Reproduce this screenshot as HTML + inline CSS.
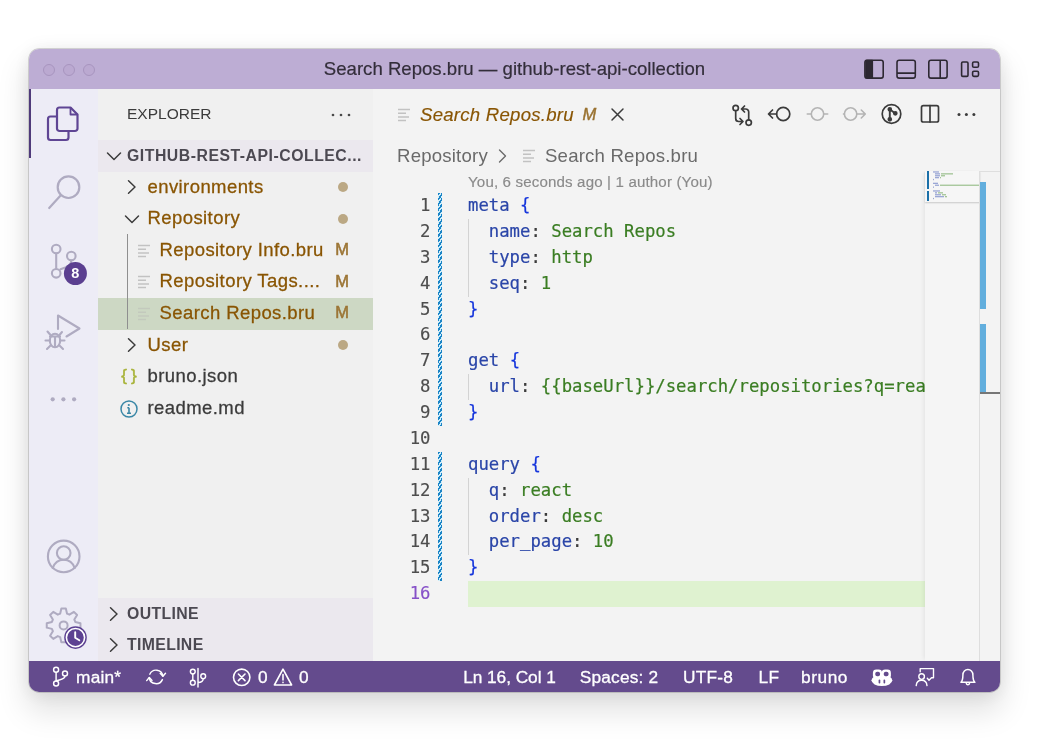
<!DOCTYPE html>
<html lang="en">
<head>
<meta charset="utf-8">
<title>Search Repos.bru — github-rest-api-collection</title>
<style>
*{box-sizing:border-box;margin:0;padding:0}
html,body{width:1039px;height:743px;background:#fff;overflow:hidden}
body{font-family:"Liberation Sans",sans-serif;position:relative;color:#3b3b3b}
#win{transform:translateZ(0);position:absolute;left:29px;top:49px;width:971px;height:643px;border-radius:10px;overflow:hidden;background:#f3f3f3;
 box-shadow:0 0 0 .7px rgba(0,0,0,.2),0 17px 30px 3px rgba(0,0,0,.115),0 2px 20px rgba(0,0,0,.085)}
#title{position:absolute;left:0;top:0;width:971px;height:40px;background:#bdadd4}
#title .t{position:absolute;left:0;right:0;top:0;height:40px;line-height:40px;text-align:center;font-size:18.600px;color:#332e3a;-webkit-text-stroke:.2px}
.tl{position:absolute;top:15px;width:12px;height:12px;border-radius:50%;border:1px solid #a895bf;background:#bba9d1}
#act{position:absolute;left:0;top:40px;width:69px;height:572px;background:#edecf6}
#side{position:absolute;left:69px;top:40px;width:275px;height:572px;background:#f0f0f0}
#ed{position:absolute;left:344px;top:40px;width:627px;height:572px;background:#f3f3f3}
#status{position:absolute;left:0;top:612px;width:971px;height:31px;background:#644b8d;color:#fff;font-size:18px}
.abs{position:absolute}
.row{position:absolute;left:0;width:275px;height:31.600px;line-height:31.600px;font-size:18.500px;white-space:nowrap;letter-spacing:.42px}
.mono{font-family:"DejaVu Sans Mono","Liberation Mono",monospace}

.row .tx{position:absolute;top:0;height:31.600px;line-height:30.200px;-webkit-text-stroke:.28px}
.mod{color:#895503}
.badge{-webkit-text-stroke:.55px;position:absolute;left:237px;top:-.7px;width:14px;text-align:center;color:#9c7535;font-size:16.500px;letter-spacing:0}
.dot{position:absolute;left:239.600px;top:10.500px;width:10.200px;height:10.200px;border-radius:50%;background:#bba884}
.hdr{position:absolute;left:0;width:275px;height:31.600px;background:#ebe8ee;font-weight:bold;font-size:15.800px;color:#4c4952;line-height:31.600px}
svg.ic{position:absolute;overflow:visible}

#ed .ui{position:absolute;white-space:nowrap}
.ln{-webkit-text-stroke:.15px;position:absolute;left:0;width:57.500px;text-align:right;font-size:17.300px;height:25.870px;line-height:25.870px;color:#4d4d4d}
.cl{-webkit-text-stroke:.2px;position:absolute;left:95px;font-size:17.300px;height:25.870px;line-height:25.870px;white-space:pre}
.k{color:#2a45a8}.b{color:#1535dc}.v{color:#3a7d22}.p{color:#3b3b3b}
.ig{position:absolute;left:95px;width:1px;background:#d3d3d3}
.dg{position:absolute;left:65px;width:4.300px;background:repeating-linear-gradient(125deg,#1a84c6 0 1.650px,#cfeefa 1.650px 3px)}
.sb{position:absolute;top:1px;height:31px;line-height:31px;white-space:nowrap;font-size:17.300px;color:#fff;-webkit-text-stroke:.3px;letter-spacing:.2px}
</style>
</head>
<body>
<div id="win">
 <div id="title">
  <div class="tl" style="left:14px"></div><div class="tl" style="left:34px"></div><div class="tl" style="left:54px"></div>
  <svg class="ic" style="left:830px;top:6px" width="130" height="28" viewBox="859 55 130 28" fill="none" stroke="#2d2832" stroke-width="1.600" stroke-linejoin="round">
   <rect x="864.900" y="60.200" width="18.300" height="17.900" rx="2.200"/><path d="M866 60.500H872.300V77.800H866Z" fill="#2d2832"/>
   <rect x="897" y="60.200" width="18.300" height="17.900" rx="2.200"/><path d="M897 73.100H915.300"/>
   <rect x="928.800" y="60.200" width="18.300" height="17.900" rx="2.200"/><path d="M940.200 60.200V78.100"/>
   <rect x="961.600" y="62" width="6.400" height="14.400" rx="1.200"/>
   <rect x="972.600" y="62" width="5.900" height="5.200" rx="1.300"/><rect x="972.600" y="71.200" width="5.900" height="5.200" rx="1.300"/>
  </svg>
  <div class="t">Search Repos.bru — github-rest-api-collection</div>
 </div>
 <div id="act">
  <div class="abs" style="left:0;top:0;width:2px;height:69px;background:#4f3a7a"></div>
  <svg class="abs" style="left:0;top:0" width="69" height="572" viewBox="0 0 69 572" fill="none" stroke-linecap="round" stroke-linejoin="round">
   <!-- explorer (active) -->
   <g stroke="#5f4594" stroke-width="2.2">
    <path d="M27.5 27.5H21.5a2.5 2.5 0 0 0-2.500 2.500V48.500a2.500 2.500 0 0 0 2.500 2.500H37a2.500 2.500 0 0 0 2.500-2.500V42.500"/>
    <path d="M30.500 18.500H41.500L48.500 25.500V39.500a2.500 2.500 0 0 1-2.500 2.500H30.500a2.500 2.500 0 0 1-2.500-2.500V21a2.500 2.500 0 0 1 2.500-2.500Z"/>
    <path d="M41.500 19V25.500H48" stroke-width="1.8"/>
   </g>
   <!-- search -->
   <g stroke="#afabc1" stroke-width="2.2">
    <circle cx="39.5" cy="98.200" r="10.800"/>
    <path d="M31.800 106.300L20.200 119"/>
   </g>
   <!-- source control -->
   <g stroke="#afabc1" stroke-width="2.100">
    <circle cx="27.200" cy="160" r="4.300"/>
    <circle cx="42.300" cy="167" r="4.300"/>
    <circle cx="27.200" cy="184.300" r="4.300"/>
    <path d="M27.200 164.500V180"/>
    <path d="M42.300 171.500c0 5-4 6.500-10.800 8.800"/>
   </g>
   <circle cx="46.400" cy="184.500" r="11.500" fill="#5b3f90"/>
   <!-- debug -->
   <g stroke="#afabc1" stroke-width="2.100">
    <path d="M29 240V226.500L50.500 239.500L37.500 247.500"/>
    <ellipse cx="26" cy="251.500" rx="5.200" ry="6.800"/>
    <path d="M21 247.500H31M26 247.500V258M20.800 251.500H16.500M31.200 251.500H35.500M21.500 256.500L18 260M30.500 256.500L34 260M21.500 246L18.500 242.500M30.500 246L33 243"/>
   </g>
   <!-- more -->
   <g fill="#afabc1"><circle cx="23.700" cy="310.300" r="2.100"/><circle cx="34.400" cy="310.300" r="2.100"/><circle cx="45.100" cy="310.300" r="2.100"/></g>
   <!-- account -->
   <g stroke="#afabc1" stroke-width="2.100">
    <circle cx="34.700" cy="467.400" r="15.800"/>
    <circle cx="34.700" cy="464" r="6.800"/>
    <path d="M23.700 479c2-5.800 6.300-8.300 11-8.300s9 2.500 11 8.300"/>
   </g>
   <!-- gear -->
   <g stroke="#afabc1" stroke-width="2" transform="translate(34.600 536.400)">
    <circle cx="0" cy="0" r="4"/>
    <path d="M-3.47 -11.70L-2.24 -16.85L2.24 -16.85L3.47 -11.70L5.81 -10.73L10.33 -13.50L13.50 -10.33L10.73 -5.81L11.70 -3.47L16.85 -2.24L16.85 2.24L11.70 3.47L10.73 5.81L13.50 10.33L10.33 13.50L5.81 10.73L3.47 11.70L2.24 16.85L-2.24 16.85L-3.47 11.70L-5.81 10.73L-10.33 13.50L-13.50 10.33L-10.73 5.81L-11.70 3.47L-16.85 2.24L-16.85 -2.24L-11.70 -3.47L-10.73 -5.81L-13.50 -10.33L-10.33 -13.50L-5.81 -10.73Z"/>
   </g>
   <circle cx="46.500" cy="548.600" r="11.300" fill="#5d4292"/>
   <circle cx="46.500" cy="548.600" r="9.100" fill="none" stroke="#fff" stroke-width="1.600"/>
   <path d="M46.200 543.300V548.800L50.300 551.300" stroke="#fff" stroke-width="1.900"/>
  </svg>
  <div class="abs" style="left:34.900px;top:173px;width:23px;height:23px;line-height:23px;text-align:center;color:#fff;font-size:14.500px;font-weight:bold">8</div>
 </div>
 <div id="side">
<div class="abs" style="left:29px;top:0;height:51px;line-height:50px;font-size:15.500px;color:#3b3b3b;letter-spacing:0">EXPLORER</div>
<svg class="ic" style="left:233px;top:23.500px" width="20" height="4" viewBox="0 0 20 4" fill="#4a4a4a"><circle cx="2" cy="2" r="1.350"/><circle cx="10" cy="2" r="1.350"/><circle cx="18" cy="2" r="1.350"/></svg>
<div class="hdr" style="top:51px"><svg class="ic" style="left:7.5px;top:8px" width="16" height="16" viewBox="0 0 16 16" fill="none" stroke="#3b3b3b" stroke-width="1.500" stroke-linecap="round" stroke-linejoin="round"><path d="M1.500 5L8 11.500L14.500 5"/></svg><span class="abs" style="left:29px;top:0;white-space:nowrap;letter-spacing:.52px">GITHUB-REST-API-COLLEC...</span></div>
<div class="row" style="top:82.6px;"><svg class="ic" style="left:25.5px;top:7.800000000000001px" width="16" height="16" viewBox="0 0 16 16" fill="none" stroke="#3b3b3b" stroke-width="1.500" stroke-linecap="round" stroke-linejoin="round"><path d="M4.500 1.800L11 8L4.500 14.200"/></svg><span class="tx mod" style="left:49.500px">environments</span><span class="dot"></span></div>
<div class="row" style="top:114.2px;"><svg class="ic" style="left:25.5px;top:7.800000000000001px" width="16" height="16" viewBox="0 0 16 16" fill="none" stroke="#3b3b3b" stroke-width="1.500" stroke-linecap="round" stroke-linejoin="round"><path d="M1.500 5L8 11.500L14.500 5"/></svg><span class="tx mod" style="left:49.500px">Repository</span><span class="dot"></span></div>
<div class="row" style="top:145.8px;"><svg class="ic" style="left:40px;top:7.800000000000001px" width="13" height="16" viewBox="0 0 13 16" fill="none" stroke="#c2c2c2" stroke-width="1.500"><path d="M0 2.500H12M0 6.200H8M0 9.900H11M0 13.600H8"/></svg><span class="tx mod" style="left:61.500px">Repository Info.bru</span><span class="badge">M</span></div>
<div class="row" style="top:177.4px;"><svg class="ic" style="left:40px;top:7.800000000000001px" width="13" height="16" viewBox="0 0 13 16" fill="none" stroke="#c2c2c2" stroke-width="1.500"><path d="M0 2.500H12M0 6.200H8M0 9.900H11M0 13.600H8"/></svg><span class="tx mod" style="left:61.500px">Repository Tags....</span><span class="badge">M</span></div>
<div class="row" style="top:209.0px;background:#cdd8c4;"><svg class="ic" style="left:40px;top:7.800000000000001px" width="13" height="16" viewBox="0 0 13 16" fill="none" stroke="#c3c9bd" stroke-width="1.500"><path d="M0 2.500H12M0 6.200H8M0 9.900H11M0 13.600H8"/></svg><span class="tx mod" style="left:61.500px">Search Repos.bru</span><span class="badge">M</span></div>
<div class="row" style="top:240.6px;"><svg class="ic" style="left:25.5px;top:7.800000000000001px" width="16" height="16" viewBox="0 0 16 16" fill="none" stroke="#3b3b3b" stroke-width="1.500" stroke-linecap="round" stroke-linejoin="round"><path d="M4.500 1.800L11 8L4.500 14.200"/></svg><span class="tx mod" style="left:49.500px">User</span><span class="dot"></span></div>
<div class="row" style="top:272.2px;"><span class="tx" style="left:23.300px;color:#a9b43c;font-size:17px;letter-spacing:4px;-webkit-text-stroke:.5px">{}</span><span class="tx" style="left:49.500px">bruno.json</span></div>
<div class="row" style="top:303.8px;"><svg class="ic" style="left:22px;top:6.800px" width="18" height="18" viewBox="0 0 18 18" fill="none" stroke="#3a87a6" stroke-width="1.500"><circle cx="9" cy="9" r="8"/><path d="M9 7.800V13.200M7.300 7.800H9M7 13.300H11" stroke-width="1.600"/><circle cx="8.800" cy="5" r="1.100" fill="#3a87a6" stroke="none"/></svg><span class="tx" style="left:49.500px">readme.md</span></div>
<div class="abs" style="left:29px;top:145.2px;width:1px;height:94.8px;background:#8f8f8f"></div>
<div class="hdr" style="top:509.400px"><svg class="ic" style="left:7.5px;top:7.800000000000001px" width="16" height="16" viewBox="0 0 16 16" fill="none" stroke="#3b3b3b" stroke-width="1.500" stroke-linecap="round" stroke-linejoin="round"><path d="M4.500 1.800L11 8L4.500 14.200"/></svg><span class="abs" style="left:29px;top:0;letter-spacing:.35px">OUTLINE</span></div>
<div class="hdr" style="top:540px;height:32px"><svg class="ic" style="left:7.5px;top:7.800000000000001px" width="16" height="16" viewBox="0 0 16 16" fill="none" stroke="#3b3b3b" stroke-width="1.500" stroke-linecap="round" stroke-linejoin="round"><path d="M4.500 1.800L11 8L4.500 14.200"/></svg><span class="abs" style="left:29px;top:0;letter-spacing:.35px">TIMELINE</span></div>
</div>
 <div id="ed">
<svg class="ic" style="left:25px;top:17.5px" width="13" height="16" viewBox="0 0 13 16" fill="none" stroke="#c2c2c2" stroke-width="1.500"><path d="M0 2.500H12M0 6.200H8M0 9.900H11M0 13.600H8"/></svg><div class="ui" style="left:47px;top:0;height:51px;line-height:51px;font-size:18.600px;font-style:italic;color:#895503;letter-spacing:.25px;-webkit-text-stroke:.15px">Search Repos.bru</div>
<div class="ui" style="left:209.500px;top:0;height:51px;line-height:50px;font-size:16.500px;font-style:italic;color:#9a7230;-webkit-text-stroke:.45px">M</div>
<svg class="ic" style="left:237.500px;top:19px" width="13" height="13" viewBox="0 0 13 13" fill="none" stroke="#3b3b3b" stroke-width="1.500" stroke-linecap="round"><path d="M1 1L12 12M12 1L1 12"/></svg>
<svg class="ic" style="left:350px;top:10px" width="270" height="32" viewBox="723 99 270 32" fill="none" stroke-linecap="round" stroke-linejoin="round">
 <g stroke="#3b3b3b" stroke-width="1.700">
  <circle cx="735.700" cy="108" r="2.700"/><circle cx="748.700" cy="122.600" r="2.700"/>
  <path d="M735.700 110.800V118.500a3 3 0 0 0 3 3H742.500M740 118.500L743 121.500L740 124.500"/>
  <path d="M748.700 119.800V112a3 3 0 0 0-3-3H742M744.500 106L741.500 109L744.500 112"/>
  <circle cx="783.200" cy="114" r="6.600"/><path d="M776.500 114H768.800M772.500 110L768.500 114L772.500 118"/>
  <circle cx="891.500" cy="114" r="9.300"/>
  <circle cx="889.800" cy="109.300" r="1.500" fill="#3b3b3b"/><circle cx="889.800" cy="119.300" r="1.500" fill="#3b3b3b"/><circle cx="895.300" cy="113.300" r="1.500" fill="#3b3b3b"/>
  <path d="M889.800 109.500V119M895.300 113.500L890 109.500" stroke-width="1.900"/>
  <rect x="921.500" y="105.700" width="17" height="16.300" rx="1.800"/><path d="M930 105.700V122"/>
 </g>
 <g stroke="#b4b4b4" stroke-width="1.600">
  <circle cx="817.500" cy="114" r="6.200"/><path d="M811.300 114H807.300M823.700 114H827.700"/>
  <circle cx="850.600" cy="114" r="6.200"/><path d="M856.800 114H865M861.300 110L865.300 114L861.300 118M844.400 114H843.500"/>
 </g>
 <g fill="#3b3b3b"><circle cx="959" cy="114.400" r="1.500"/><circle cx="966.400" cy="114.400" r="1.500"/><circle cx="973.900" cy="114.400" r="1.500"/></g>
</svg>
<div class="ui" style="left:24px;top:51px;height:31px;line-height:31px;font-size:18.600px;color:#6a6a6a;letter-spacing:.2px">Repository</div>
<svg class="ic" style="left:122px;top:58.500px" width="16" height="16" viewBox="0 0 16 16" fill="none" stroke="#6a6a6a" stroke-width="1.400" stroke-linecap="round" stroke-linejoin="round"><path d="M4.500 2L10.500 8L4.500 14"/></svg>
<svg class="ic" style="left:150px;top:58.5px" width="13" height="16" viewBox="0 0 13 16" fill="none" stroke="#c2c2c2" stroke-width="1.500"><path d="M0 2.500H12M0 6.200H8M0 9.900H11M0 13.600H8"/></svg><div class="ui" style="left:172px;top:51px;height:31px;line-height:31px;font-size:18.600px;color:#6a6a6a;letter-spacing:.2px">Search Repos.bru</div>
<div class="ui" style="left:95px;top:82px;height:22px;line-height:22px;font-size:15.100px;color:#8a8a8a;letter-spacing:.15px;-webkit-text-stroke:.15px">You, 6 seconds ago | 1 author (You)</div>
<div class="abs" style="left:95px;top:492.15px;width:457px;height:25.400px;background:#dff2d0"></div>
<div class="mono abs" style="left:0;top:0;width:552px;height:572px;overflow:hidden">
<div class="ln" style="top:104.10px">1</div><div class="cl" style="top:104.10px"><span class="k">meta</span> <span class="b">{</span></div>
<div class="ln" style="top:129.97px">2</div><div class="cl" style="top:129.97px">  <span class="k">name</span><span class="p">:</span> <span class="v">Search Repos</span></div>
<div class="ln" style="top:155.84px">3</div><div class="cl" style="top:155.84px">  <span class="k">type</span><span class="p">:</span> <span class="v">http</span></div>
<div class="ln" style="top:181.71px">4</div><div class="cl" style="top:181.71px">  <span class="k">seq</span><span class="p">:</span> <span class="v">1</span></div>
<div class="ln" style="top:207.58px">5</div><div class="cl" style="top:207.58px"><span class="b">}</span></div>
<div class="ln" style="top:233.45px">6</div><div class="cl" style="top:233.45px"></div>
<div class="ln" style="top:259.32px">7</div><div class="cl" style="top:259.32px"><span class="k">get</span> <span class="b">{</span></div>
<div class="ln" style="top:285.19px">8</div><div class="cl" style="top:285.19px">  <span class="k">url</span><span class="p">:</span> <span class="v">{{baseUrl}}/search/repositories?q=react&amp;sort=stars</span></div>
<div class="ln" style="top:311.06px">9</div><div class="cl" style="top:311.06px"><span class="b">}</span></div>
<div class="ln" style="top:336.93px">10</div><div class="cl" style="top:336.93px"></div>
<div class="ln" style="top:362.80px">11</div><div class="cl" style="top:362.80px"><span class="k">query</span> <span class="b">{</span></div>
<div class="ln" style="top:388.67px">12</div><div class="cl" style="top:388.67px">  <span class="k">q</span><span class="p">:</span> <span class="v">react</span></div>
<div class="ln" style="top:414.54px">13</div><div class="cl" style="top:414.54px">  <span class="k">order</span><span class="p">:</span> <span class="v">desc</span></div>
<div class="ln" style="top:440.41px">14</div><div class="cl" style="top:440.41px">  <span class="k">per_page</span><span class="p">:</span> <span class="v">10</span></div>
<div class="ln" style="top:466.28px">15</div><div class="cl" style="top:466.28px"><span class="b">}</span></div>
<div class="ln" style="top:492.15px;color:#8650c8">16</div><div class="cl" style="top:492.15px"></div>
</div>
<div class="ig" style="top:129.97px;height:77.61px"></div>
<div class="ig" style="top:285.19px;height:25.87px"></div>
<div class="ig" style="top:388.67px;height:77.61px"></div>
<div class="dg" style="top:104.10px;height:232.83px"></div>
<div class="dg" style="top:362.80px;height:129.35px"></div>
<div class="abs" style="left:552px;top:82px;width:55px;height:490px;background:#f5f5f5;box-shadow:-3px 0 4px -2px rgba(0,0,0,.07)"></div>
<div class="abs" style="left:552px;top:81.500px;width:55px;height:31px;background:#f6f6f6;box-shadow:0 1px 1.500px rgba(0,0,0,.18)"></div>
<div class="abs" style="left:554px;top:82px;width:2px;height:17.700px;background:#1a6fa8"></div>
<div class="abs" style="left:554px;top:102px;width:2px;height:9.500px;background:#1a6fa8"></div>
<svg class="ic" style="left:560px;top:82px" width="48" height="32" viewBox="0 0 48 32"><rect x="0" y="0.3" width="6.0" height="1.300" fill="#5f73c0" opacity=".6"/><rect x="2.0" y="2.2" width="5.0" height="1.300" fill="#5f73c0" opacity=".6"/><rect x="8.0" y="2.2" width="12.0" height="1.300" fill="#6ba356" opacity=".6"/><rect x="2.0" y="4.1" width="5.0" height="1.300" fill="#5f73c0" opacity=".6"/><rect x="8.0" y="4.1" width="4.0" height="1.300" fill="#6ba356" opacity=".6"/><rect x="2.0" y="6.0" width="4.0" height="1.300" fill="#5f73c0" opacity=".6"/><rect x="7.0" y="6.0" width="1.0" height="1.300" fill="#6ba356" opacity=".6"/><rect x="0" y="7.9" width="1.0" height="1.300" fill="#5f73c0" opacity=".6"/><rect x="0" y="11.7" width="5.0" height="1.300" fill="#5f73c0" opacity=".6"/><rect x="2.0" y="13.6" width="4.0" height="1.300" fill="#5f73c0" opacity=".6"/><rect x="7.0" y="13.6" width="39.0" height="1.300" fill="#6ba356" opacity=".6"/><rect x="0" y="15.5" width="1.0" height="1.300" fill="#5f73c0" opacity=".6"/><rect x="0" y="19.3" width="7.0" height="1.300" fill="#5f73c0" opacity=".6"/><rect x="2.0" y="21.2" width="2.0" height="1.300" fill="#5f73c0" opacity=".6"/><rect x="5.0" y="21.2" width="5.0" height="1.300" fill="#6ba356" opacity=".6"/><rect x="2.0" y="23.1" width="6.0" height="1.300" fill="#5f73c0" opacity=".6"/><rect x="9.0" y="23.1" width="4.0" height="1.300" fill="#6ba356" opacity=".6"/><rect x="2.0" y="25.0" width="9.0" height="1.300" fill="#5f73c0" opacity=".6"/><rect x="12.0" y="25.0" width="2.0" height="1.300" fill="#6ba356" opacity=".6"/><rect x="0" y="26.9" width="1.0" height="1.300" fill="#5f73c0" opacity=".6"/></svg>
<div class="abs" style="left:606px;top:81.500px;width:21px;height:491px;border-left:1px solid #dedede;border-top:1px solid #dedede"></div>
<div class="abs" style="left:607px;top:92.800px;width:6px;height:127px;background:#62aedd"></div>
<div class="abs" style="left:607px;top:234.600px;width:6px;height:68.600px;background:#62aedd"></div>
<div class="abs" style="left:607px;top:303px;width:20px;height:2px;background:#767676"></div>
</div>
 <div id="status">
<svg class="ic" style="left:0;top:0" width="971" height="31" viewBox="29 661 971 31" fill="none" stroke="#fff" stroke-width="1.600" stroke-linecap="round" stroke-linejoin="round">
 <!-- branch -->
 <g stroke-width="1.450">
 <circle cx="56.100" cy="669.800" r="2.500"/><circle cx="56.100" cy="683.500" r="2.500"/><circle cx="65" cy="673.500" r="2.500"/>
 <path d="M56.100 672.400V680.900M65 676.100c0 3.600-4.500 3.400-8.900 4.800"/>
 <!-- sync -->
 <path d="M149.800 674.200a6.900 6.900 0 0 1 13.100 1.800M162.400 679.600a6.900 6.900 0 0 1-13.100-1.800"/>
 <path d="M160.200 673.300L162.900 676.300L165.500 673.200M152 680.500L149.300 677.500L146.700 680.600"/>
 <!-- graph -->
 <circle cx="192.800" cy="671.600" r="2.400"/><circle cx="192.800" cy="682.700" r="2.400"/><circle cx="203.200" cy="676.200" r="2.400"/>
 <path d="M192.800 674.100V680.200M198 668.500V687M203.200 678.700c0 2.600-2 3.600-5.200 3.900"/>
 </g>
 <!-- error -->
 <circle cx="241.700" cy="677.300" r="8.200"/><path d="M238.400 674L245 680.600M245 674L238.400 680.600"/>
 <!-- warning -->
 <path d="M283 669.200L291.600 685H274.400Z"/><path d="M283 674.500V680M283 682.300V682.600"/>
 <!-- copilot -->
 <g stroke="none">
  <ellipse cx="881.900" cy="680.300" rx="10.400" ry="5.800" fill="#fff"/>
  <rect x="872.900" y="669.600" width="9.200" height="9" rx="3.400" fill="#fff"/>
  <rect x="881.700" y="669.600" width="9.200" height="9" rx="3.400" fill="#fff"/>
  <rect x="875.300" y="671.700" width="4.700" height="4.500" rx="1.800" fill="#644b8d"/>
  <rect x="883.800" y="671.700" width="4.700" height="4.500" rx="1.800" fill="#644b8d"/>
  <rect x="878.600" y="679.600" width="1.700" height="3.900" rx=".8" fill="#644b8d"/>
  <rect x="883.500" y="679.600" width="1.700" height="3.900" rx=".8" fill="#644b8d"/>
 </g>
 <!-- feedback -->
 <g stroke-width="1.400">
  <circle cx="921.600" cy="676.600" r="2.800"/>
  <path d="M916.200 685.600c.3-3.300 2.400-5.300 5.400-5.300s5.100 2 5.400 5.300"/>
  <path d="M920.200 671.800V668.600H933.500V677.800H931.500L929 680.200L927.300 678.200"/>
 </g>
 <!-- bell -->
 <g stroke-width="1.500">
  <path d="M960.900 682.300c1.800-1.400 2-3 2-7.300a5 5.500 0 0 1 10 0c0 4.300 .2 5.900 2 7.300Z"/>
  <path d="M966.300 683.600a1.700 1.700 0 0 0 3.200 0"/>
 </g>
</svg>
<div class="sb" style="left:47.1px">main*</div>
<div class="sb" style="left:229.0px">0</div>
<div class="sb" style="left:270.0px">0</div>
<div class="sb" style="left:434.2px;letter-spacing:-.05px">Ln 16, Col 1</div>
<div class="sb" style="left:550.7px">Spaces: 2</div>
<div class="sb" style="left:654.0px">UTF-8</div>
<div class="sb" style="left:729.6px">LF</div>
<div class="sb" style="left:772.0px;letter-spacing:.55px">bruno</div>
</div>
</div>
</body>
</html>
